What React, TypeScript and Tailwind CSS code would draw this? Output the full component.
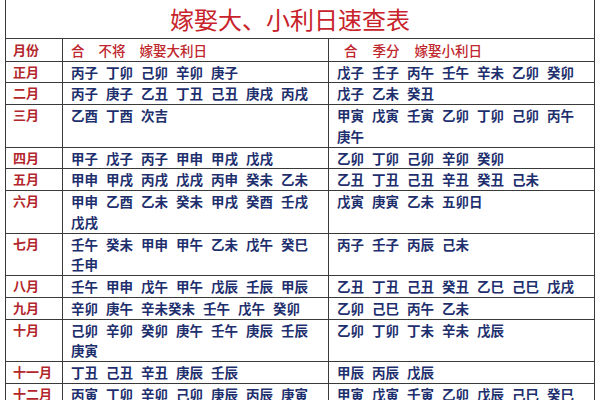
const rows: { m: string; big: string[]; small: string[] }[] = [
  { m: "正月", big: ["丙子", "丁卯", "己卯", "辛卯", "庚子"], small: ["戊子", "壬子", "丙午", "壬午", "辛未", "乙卯", "癸卯"] },
  { m: "二月", big: ["丙子", "庚子", "乙丑", "丁丑", "己丑", "庚戌", "丙戌"], small: ["戊子", "乙未", "癸丑"] },
  { m: "三月", big: ["乙酉", "丁酉", "次吉"], small: ["甲寅", "戊寅", "壬寅", "乙卯", "丁卯", "己卯", "丙午", "庚午"] },
  { m: "四月", big: ["甲子", "戊子", "丙子", "甲申", "甲戌", "戊戌"], small: ["乙卯", "丁卯", "己卯", "辛卯", "癸卯"] },
  { m: "五月", big: ["甲申", "甲戌", "丙戌", "戊戌", "丙申", "癸未", "乙未"], small: ["乙丑", "丁丑", "己丑", "辛丑", "癸丑", "己未"] },
  { m: "六月", big: ["甲申", "乙酉", "乙未", "癸未", "甲戌", "癸酉", "壬戌", "戊戌"], small: ["戊寅", "庚寅", "乙未", "五卯日"] },
  { m: "七月", big: ["壬午", "癸未", "甲申", "甲午", "乙未", "戊午", "癸巳", "壬申"], small: ["丙子", "壬子", "丙辰", "己未"] },
  { m: "八月", big: ["壬午", "甲申", "戊午", "甲午", "戊辰", "壬辰", "甲辰"], small: ["乙丑", "丁丑", "己丑", "癸丑", "乙巳", "己巳", "戊戌"] },
  { m: "九月", big: ["辛卯", "庚午", "辛未癸未", "壬午", "戊午", "癸卯"], small: ["乙卯", "己巳", "丙午", "乙未"] },
  { m: "十月", big: ["己卯", "辛卯", "癸卯", "庚午", "壬午", "庚辰", "壬辰", "庚寅"], small: ["乙卯", "丁卯", "丁未", "辛未", "戊辰"] },
  { m: "十一月", big: ["丁丑", "己丑", "辛丑", "庚辰", "壬辰"], small: ["甲辰", "丙辰", "戊辰"] },
  { m: "十二月", big: ["丙寅", "丁卯", "辛卯", "己卯", "庚辰", "丙辰", "庚寅"], small: ["甲寅", "戊寅", "壬寅", "乙卯", "戊辰", "己巳", "癸巳"] },
];

function Days({ items }: { items: string[] }) {
  return (
    <div className="flex flex-wrap gap-x-[8px] pl-[8px] pr-1">
      {items.map((d, i) => (
        <span key={i}>{d}</span>
      ))}
    </div>
  );
}

export default function App() {
  return (
    <div
      className="w-[600px] h-[400px] overflow-hidden bg-white"
      style={{ fontFamily: '"Noto Sans CJK SC", "Noto Sans", sans-serif' }}
    >
      <table className="ml-[5px] w-[589px] border-collapse table-fixed">
        <colgroup>
          <col className="w-[57px]" />
          <col className="w-[266px]" />
          <col className="w-[266px]" />
        </colgroup>
        <tbody>
          <tr>
            <td
              colSpan={3}
              className="h-[38px] border-x border-b border-[#3a3a3a] text-center pr-5 text-[24px] leading-none text-[#c8232b]"
            >
              嫁娶大、小利日速查表
            </td>
          </tr>
          <tr className="text-[13.5px] leading-[22px] text-[#c0262c] font-medium">
            <td className="border border-[#3a3a3a] pl-[7px] align-top text-[13px] font-bold text-[#b3262b]">月份</td>
            <td className="border border-[#3a3a3a] align-top">
              <div className="flex gap-x-[14px] pl-[8px]">
                <span>合</span>
                <span>不将</span>
                <span>嫁娶大利日</span>
              </div>
            </td>
            <td className="border border-[#3a3a3a] align-top">
              <div className="flex gap-x-[15px] pl-[15px]">
                <span>合</span>
                <span>季分</span>
                <span>嫁娶小利日</span>
              </div>
            </td>
          </tr>
          {rows.map((r) => (
            <tr key={r.m} className="text-[13.5px] leading-[20.75px] text-[#1e2f6e] font-semibold">
              <td className="border border-[#3a3a3a] pl-[7px] align-top text-[13px] font-bold text-[#b3262b] whitespace-nowrap">
                {r.m}
              </td>
              <td className="border border-[#3a3a3a] align-top">
                <Days items={r.big} />
              </td>
              <td className="border border-[#3a3a3a] align-top">
                <Days items={r.small} />
              </td>
            </tr>
          ))}
        </tbody>
      </table>
    </div>
  );
}
